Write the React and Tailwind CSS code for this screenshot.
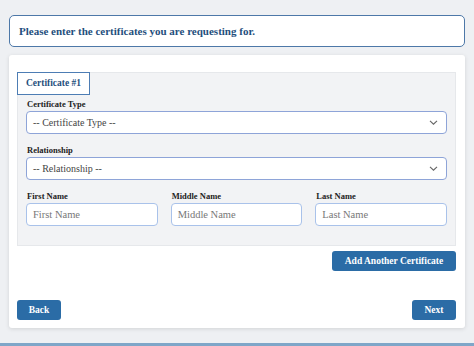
import React from "react";

const serif = { fontFamily: '"Liberation Serif", "DejaVu Serif", serif' };

function Chevron() {
  return (
    <svg width="9" height="5" viewBox="0 0 9 5" className="shrink-0">
      <path d="M1 0.8l3.5 3.4 3.5-3.4" fill="none" stroke="#666" strokeWidth="1.1" />
    </svg>
  );
}

function SelectBox({ text }) {
  return (
    <div className="h-[23px] rounded-[4px] border border-[#8ea4d8] bg-white flex items-center justify-between pl-[6px] pr-[8px]">
      <span className="text-[10px] text-[#444]">{text}</span>
      <Chevron />
    </div>
  );
}

function Label({ children }) {
  return <div className="text-[8.5px] font-bold text-[#222] h-[13px] leading-[13px] pl-[1px]">{children}</div>;
}

function NameField({ label }) {
  return (
    <div className="flex flex-col">
      <Label>{label}</Label>
      <div className="h-[23px] rounded-[4px] border border-[#a9c2ea] bg-white flex items-center pl-[6px]">
        <span className="text-[10.5px] text-[#777]">{label}</span>
      </div>
    </div>
  );
}

export default function App() {
  return (
    <div className="w-[474px] h-[346px] bg-[#eef0f3] flex flex-col overflow-hidden" style={serif}>
      <div className="px-[9px] pt-[15px]">
        <div className="h-[32px] rounded-[5px] border border-[#4d78a8] bg-white flex items-center pl-[9px]">
          <span className="text-[11px] font-bold text-[#1f4f7d]">Please enter the certificates you are requesting for.</span>
        </div>
        <div className="mt-[8px] h-[273px] bg-white rounded-[3px] shadow-[0_1px_4px_rgba(0,0,0,0.12)] px-[8px] pt-[17px] pr-[9px]">
          <div className="h-[174px] bg-[#f2f3f5] border border-[#e6e8eb]">
            <div className="w-[73px] h-[23px] -mt-px -ml-px border border-[#4d7db4] bg-white flex items-center justify-center">
              <span className="text-[9.5px] font-bold text-[#1f4f7d]">Certificate #1</span>
            </div>
            <div className="px-[8px] pt-[3px] flex flex-col">
              <Label>Certificate Type</Label>
              <SelectBox text="-- Certificate Type --" />
              <div className="h-[10px]" />
              <Label>Relationship</Label>
              <SelectBox text="-- Relationship --" />
              <div className="h-[10px]" />
              <div className="grid grid-cols-3 gap-[13px]">
                <NameField label="First Name" />
                <NameField label="Middle Name" />
                <NameField label="Last Name" />
              </div>
            </div>
          </div>
          <div className="flex justify-end mt-[5px]">
            <div className="w-[124px] h-[20px] rounded-[3px] bg-[#2b6ca6] flex items-center justify-center">
              <span className="text-[9.5px] font-bold text-white">Add Another Certificate</span>
            </div>
          </div>
          <div className="flex justify-between mt-[29px]">
            <div className="w-[44px] h-[20px] rounded-[3px] bg-[#2b6ca6] flex items-center justify-center">
              <span className="text-[9.5px] font-bold text-white">Back</span>
            </div>
            <div className="w-[44px] h-[20px] rounded-[3px] bg-[#2b6ca6] flex items-center justify-center">
              <span className="text-[9.5px] font-bold text-white">Next</span>
            </div>
          </div>
        </div>
      </div>
      <div className="mt-auto h-[3px] bg-[#7fa6c8]" />
    </div>
  );
}
